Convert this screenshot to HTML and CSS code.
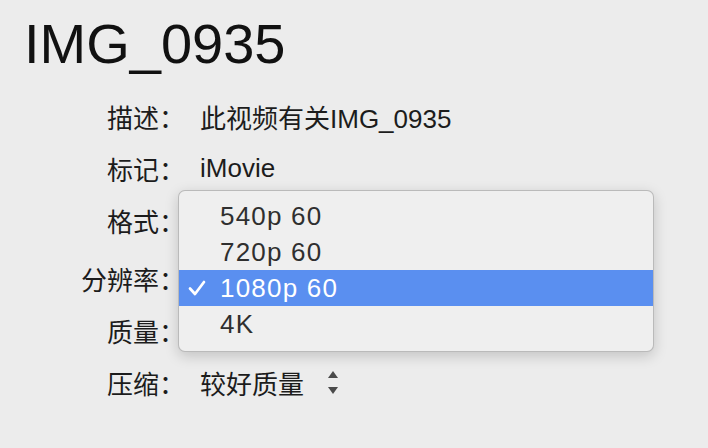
FILE: index.html
```html
<!DOCTYPE html>
<html lang="zh">
<head>
<meta charset="utf-8">
<link rel="stylesheet" href="styles.css">
</head>
<body>
<div class="page">
  <h1 class="title">IMG_0935</h1>
  <div class="form">
    <div class="row"><div class="label">描述：</div><div class="value">此视频有关IMG_0935</div></div>
    <div class="row"><div class="label">标记：</div><div class="value">iMovie</div></div>
    <div class="row"><div class="label">格式：</div><div class="value"></div></div>
    <div class="row row-popup"><div class="label">分辨率：</div><div class="value"></div></div>
    <div class="row"><div class="label">质量：</div><div class="value"></div></div>
    <div class="row"><div class="label">压缩：</div><div class="value">较好质量<span class="stepper"><span class="tri up"></span><span class="tri down"></span></span></div></div>
  </div>
  <div class="menu">
    <div class="item">540p 60</div>
    <div class="item">720p 60</div>
    <div class="item selected"><svg class="check" width="18" height="16" viewBox="0 0 18 16"><path d="M2 8.5 L7 14 L16 2" fill="none" stroke="#fff" stroke-width="2.7" stroke-linecap="round" stroke-linejoin="round"/></svg>1080p 60</div>
    <div class="item">4K</div>
  </div>
</div>
</body>
</html>
```
FILE: styles.css
```css
html, body {
  margin: 0;
  padding: 0;
  background: #ececec;
}
body {
  width: 708px;
  height: 448px;
  overflow: hidden;
  font-family: "Liberation Sans", "Noto Sans CJK SC", sans-serif;
  color: #1c1c1c;
}
.page {
  position: relative;
  padding: 16px 0 0 24px;
}
.title {
  margin: 0;
  font-size: 56px;
  font-weight: normal;
  line-height: 56px;
  color: #111;
}
.form {
  margin-top: 18px;
  margin-left: -24px;
  display: flex;
  flex-direction: column;
}
.row {
  display: flex;
  align-items: center;
  height: 52px;
  font-size: 26px;
}
.row-popup {
  margin-top: 6px;
}
.label {
  width: 185px;
  text-align: right;
  flex: none;
}
.value {
  margin-left: 15px;
  display: flex;
  align-items: center;
}
.stepper {
  display: inline-flex;
  flex-direction: column;
  gap: 9px;
  margin-left: 24px;
}
.tri {
  width: 0;
  height: 0;
  border-left: 5px solid transparent;
  border-right: 5px solid transparent;
}
.tri.up { border-bottom: 7px solid #4a4a4a; }
.tri.down { border-top: 7px solid #4a4a4a; }
.menu {
  position: absolute;
  left: 178px;
  top: 190px;
  width: 476px;
  box-sizing: border-box;
  padding: 7px 0 9px;
  background: #efefef;
  border: 1px solid rgba(0, 0, 0, 0.22);
  border-radius: 7px;
  box-shadow: 0 4px 14px rgba(0, 0, 0, 0.18);
  font-size: 26px;
  letter-spacing: 1.2px;
  color: #2f2f2f;
}
.item {
  position: relative;
  height: 36px;
  line-height: 36px;
  padding-left: 41px;
}
.item.selected {
  background: #5a8ff0;
  color: #fff;
}
.check {
  position: absolute;
  left: 9px;
  top: 10px;
}
```
